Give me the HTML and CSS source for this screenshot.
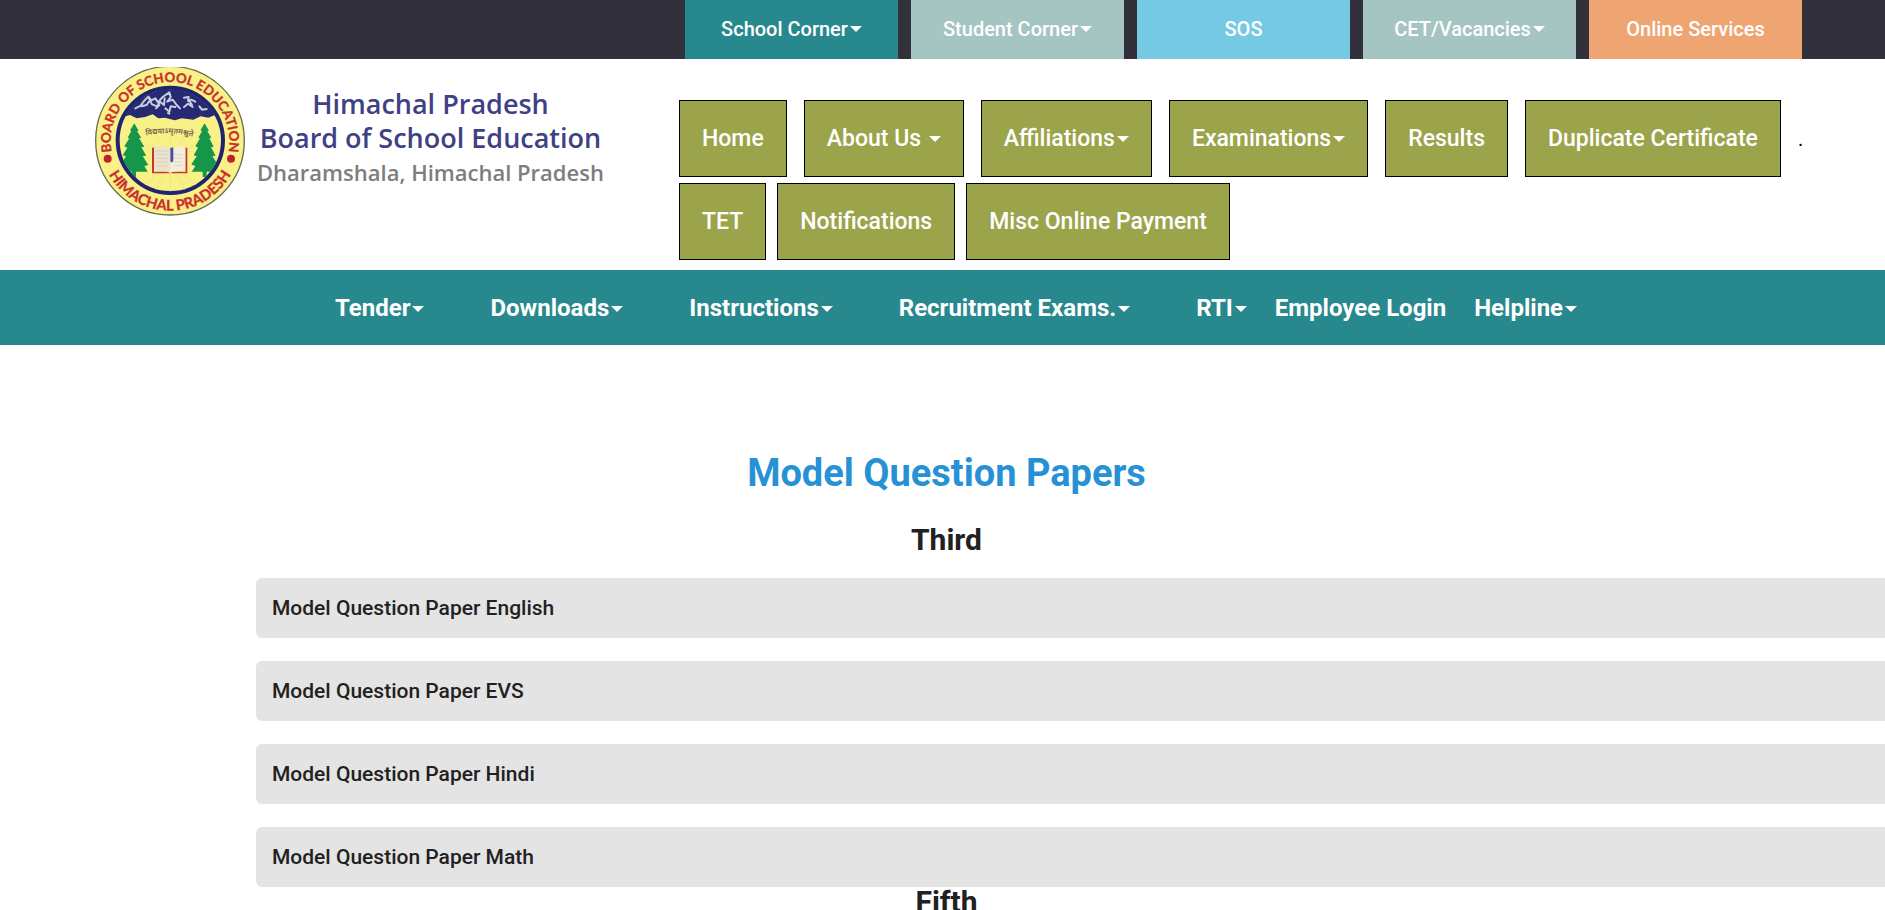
FILE: index.html
```html
<!DOCTYPE html>
<html lang="en">
<head>
    <meta charset="UTF-8">
    <meta name="viewport" content="width=device-width, initial-scale=1.0">
    <title>HPBOSE - Model Question Papers</title>
    <link rel="stylesheet" href="styles.css">
</head>
<body>

    <div class="topbar">
        <a href="#" class="tab school">School Corner<span class="caret"></span></a>
        <a href="#" class="tab student">Student Corner<span class="caret"></span></a>
        <a href="#" class="tab sos">SOS</a>
        <a href="#" class="tab student">CET/Vacancies<span class="caret"></span></a>
        <a href="#" class="tab online">Online Services</a>
    </div>

    <header class="header">
        <a href="#" class="brand">
            <svg class="logo" viewBox="45 36 450 447" role="img" aria-label="Board emblem">
                <defs>
                    <path id="arc-top" d="M 93 278 A 178 178 0 1 1 447 278"/>
                    <path id="arc-bottom" d="M 70 316 A 208 208 0 0 0 470 316"/>
                    <path id="arc-motto" d="M 190 243 Q 268 225 346 247"/>
                    <clipPath id="inner"><circle cx="271" cy="256" r="153"/></clipPath>
                </defs>
                <circle cx="270" cy="257" r="223" fill="#f8f187" stroke="#6b6b52" stroke-width="4"/>
                <circle cx="271" cy="256" r="158" fill="#f8f187" stroke="#20246f" stroke-width="12"/>
                <g clip-path="url(#inner)">
                    <path d="M110 90H435V192L405 180L385 188L362 184L340 194L305 190L285 196L255 188L235 190L218 178L195 186L170 190L150 180L110 192Z" fill="#262a72"/>
                    <g stroke="#f2e98a" stroke-width="4" opacity=".9">
                        <path d="M271 315V230M271 315L225 235M271 315L317 235M271 315L200 270M271 315L342 270M271 320L190 395M271 320L225 410M271 320V420M271 320L317 410M271 320L352 395"/>
                    </g>
                    <g fill="none" stroke="#c9cde0" stroke-linecap="round" stroke-linejoin="round" stroke-width="6">
                        <path d="M166 160L182 152L192 138L205 125L214 136L226 130L234 142L248 126L268 112L272 126L262 140L278 134L290 150L300 160"/>
                        <path d="M184 154L200 150L208 138M206 128L216 148L232 154L240 140L252 150L254 130M256 160L268 170L272 154L286 156M264 174L268 176M228 160L238 150"/>
                        <path d="M312 128L326 126L324 138L334 134L346 140M312 156L324 146L338 156M330 140L336 150M358 154L366 164L380 162"/>
                    </g>
                    <g fill="#16964a">
                        <path d="M163 205L176 228L171 228L184 249L177 250L193 275L184 277L199 302L188 303L205 330L193 333L203 350H168V366H156V350H124L134 334L122 328L138 304L128 301L142 278L133 274L148 250L143 248L154 228L150 226Z"/>
                        <path d="M374 205L387 228L382 228L394 249L388 250L401 275L393 277L407 302L397 303L414 330L402 333L412 350H380V366H368V350H335L346 334L334 328L350 304L341 301L354 278L346 274L360 250L355 248L366 228L361 226Z"/>
                    </g>
                </g>
                <path d="M216 279L222 277V350H265L271 355L277 350H316V277L322 279V355H216Z" fill="#c8372f"/>
                <path d="M222 277Q250 271 271 281V353Q250 345 222 350Z" fill="#e9e2cd"/>
                <path d="M316 277Q290 271 271 281V353Q290 345 316 350Z" fill="#f3eddd"/>
                <path d="M230 288H264M230 299H264M230 310H264M230 321H264M230 332H264M282 299H308M282 310H308M282 321H308M282 332H308" stroke="#d3c9b5" stroke-width="2"/>
                <path d="M271 279L280 277V318L275 323L271 318Z" fill="#4b51a0"/>
                <text class="motto"><textPath href="#arc-motto" startOffset="50%">विद्ययाऽमृतमश्नुते</textPath></text>
                <circle cx="83" cy="311" r="12" fill="#c0202c"/>
                <circle cx="453" cy="311" r="12" fill="#c0202c"/>
                <text class="ring-text"><textPath href="#arc-top" startOffset="50%">BOARD OF SCHOOL EDUCATION</textPath></text>
                <text class="ring-text lower"><textPath href="#arc-bottom" startOffset="50%">HIMACHAL PRADESH</textPath></text>
            </svg>
            <span class="brand-text">
                <span class="brand-name">Himachal Pradesh</span>
                <span class="brand-name">Board of School Education</span>
                <span class="brand-place">Dharamshala, Himachal Pradesh</span>
            </span>
        </a>

        <nav class="main-nav">
            <ul class="nav-row">
                <li><a href="#">Home</a></li>
                <li><a href="#">About Us <span class="caret"></span></a></li>
                <li><a href="#">Affiliations<span class="caret"></span></a></li>
                <li><a href="#">Examinations<span class="caret"></span></a></li>
                <li><a href="#">Results</a></li>
                <li><a href="#">Duplicate Certificate</a></li>
                <li class="dot">.</li>
            </ul>
            <ul class="nav-row tight">
                <li><a href="#">TET</a></li>
                <li><a href="#">Notifications</a></li>
                <li><a href="#">Misc Online Payment</a></li>
            </ul>
        </nav>
    </header>

    <nav class="sub-nav">
        <div class="sub-group">
            <a href="#">Tender<span class="caret"></span></a>
            <a href="#">Downloads<span class="caret"></span></a>
            <a href="#">Instructions<span class="caret"></span></a>
            <a href="#">Recruitment Exams.<span class="caret"></span></a>
            <a href="#">RTI<span class="caret"></span></a>
        </div>
        <a href="#">Employee Login</a>
        <a href="#">Helpline<span class="caret"></span></a>
    </nav>

    <main class="content">
        <h1>Model Question Papers</h1>

        <h2>Third</h2>
        <ul class="papers">
            <li><a href="#">Model Question Paper English</a></li>
            <li><a href="#">Model Question Paper EVS</a></li>
            <li><a href="#">Model Question Paper Hindi</a></li>
            <li><a href="#">Model Question Paper Math</a></li>
        </ul>

        <h2>Fifth</h2>
    </main>

</body>
</html>
```
FILE: styles.css
```css
* {
    box-sizing: border-box;
}
body {
    margin: 0;
    font-family: Roboto, sans-serif;
    font-weight: 500;
    color: #212121;
    background-color: #fff;
}
a {
    color: inherit;
    text-decoration: none;
}
ul {
    list-style: none;
    margin: 0;
    padding: 0;
}
.caret {
    display: inline-block;
    margin-left: 2px;
    vertical-align: 4px;
    border-top: 6px solid;
    border-left: 6px solid transparent;
    border-right: 6px solid transparent;
}

/* top bar */
.topbar {
    display: flex;
    justify-content: flex-end;
    gap: 13px;
    padding-right: 83px;
    background-color: #32313b;
}
.tab {
    width: 213px;
    line-height: 59px;
    font-size: 20px;
    text-align: center;
    color: #fff;
}
.school {
    background-color: #27888e;
}
.student {
    background-color: #a5c5c3;
}
.sos {
    background-color: #75c9e3;
}
.online {
    background-color: #efa572;
}

/* header */
.header {
    display: flex;
    align-items: flex-start;
    padding: 8px 83px 10px 95px;
}
.brand {
    display: flex;
    flex: 0 0 584px;
    gap: 12px;
}
.logo {
    width: 150px;
    height: 149px;
}
.ring-text {
    font-family: Lato, sans-serif;
    font-size: 40px;
    font-weight: 700;
    fill: #c9302c;
    stroke: #c9302c;
    text-anchor: middle;
}
.ring-text.lower {
    font-size: 44px;
}
.motto {
    font-family: "Noto Sans", sans-serif;
    font-size: 23px;
    font-weight: 600;
    fill: #6e6550;
    text-anchor: middle;
}
.brand-text {
    display: flex;
    flex-direction: column;
    align-items: center;
    padding-top: 20px;
    font-family: "Open Sans", sans-serif;
    font-weight: 600;
    line-height: 34px;
    white-space: nowrap;
}
.brand-name {
    font-size: 27px;
    color: #3f4185;
}
.brand-place {
    font-size: 22px;
    color: #7d7d7d;
}
.main-nav {
    padding-top: 33px;
    font-size: 23px;
}
.nav-row {
    display: flex;
    align-items: center;
    gap: 17px;
    margin-bottom: 6px;
    white-space: nowrap;
}
.nav-row.tight {
    gap: 11px;
    margin-bottom: 0;
}
.nav-row a {
    display: block;
    padding: 0 22px;
    line-height: 75px;
    border: 1px solid #000;
    color: #fff;
    background-color: #9ba44b;
}
.dot {
    font-size: 20px;
    font-weight: 400;
    color: #000;
}

/* teal bar */
.sub-nav {
    display: flex;
    gap: 28px;
    padding: 2px 0 0 335px;
    line-height: 73px;
    font-size: 24px;
    font-weight: 700;
    white-space: nowrap;
    color: #fff;
    background-color: #27888e;
}
.sub-group {
    display: flex;
    gap: 66px;
}

/* papers */
.content {
    padding: 104px 0 0 8px;
}
h1 {
    margin: 0 0 28px;
    font-size: 38px;
    line-height: 48px;
    text-align: center;
    color: #2791d6;
}
h2 {
    margin: 0;
    font-size: 30px;
    line-height: 30px;
    text-align: center;
}
.papers {
    display: flex;
    flex-direction: column;
    gap: 23px;
    padding: 23px 0 0 248px;
}
.papers a {
    display: block;
    padding: 0 16px;
    line-height: 60px;
    font-size: 21px;
    border-radius: 6px 0 0 6px;
    background-color: #e4e4e4;
}
```
